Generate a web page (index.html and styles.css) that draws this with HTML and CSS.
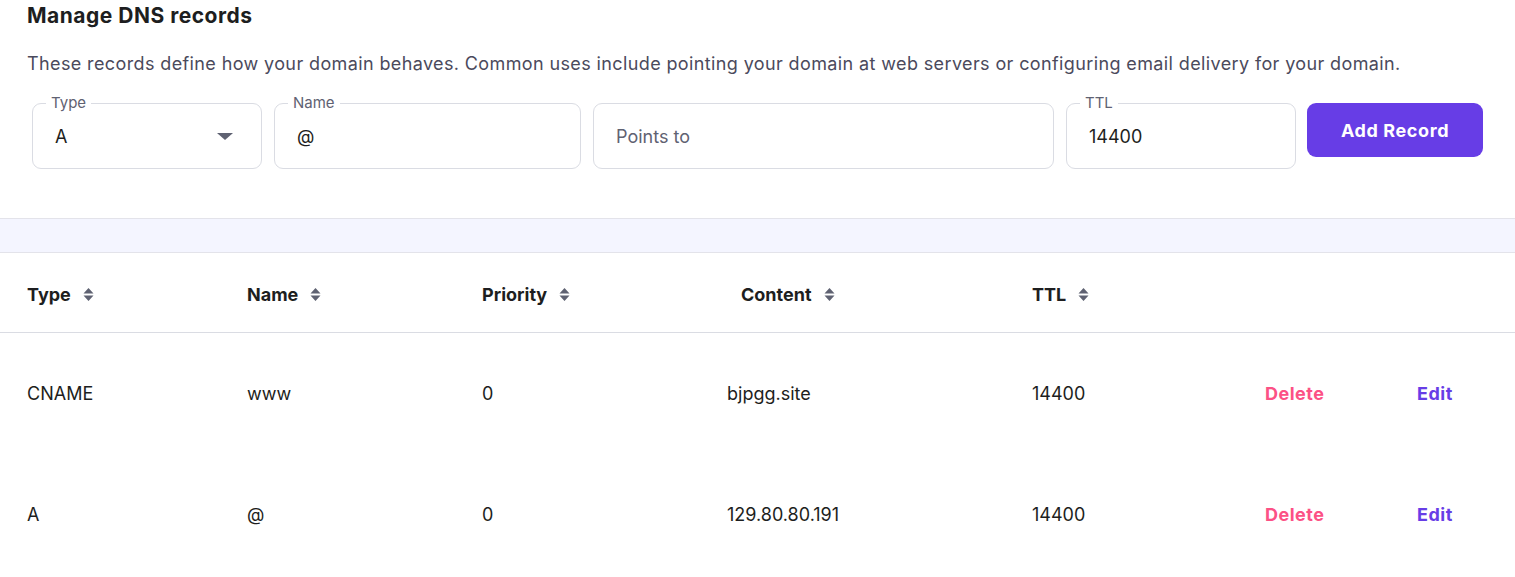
FILE: index.html
```html
<!DOCTYPE html>
<html lang="en">
<head>
<meta charset="utf-8">
<title>Manage DNS records</title>
<link rel="stylesheet" href="styles.css">
</head>
<body>
<section class="manage">
  <h2 class="title">Manage DNS records</h2>
  <p class="desc">These records define how your domain behaves. Common uses include pointing your domain at web servers or configuring email delivery for your domain.</p>
  <form class="form-row">
    <div class="field field-type">
      <span class="label">Type</span>
      <span class="value">A</span>
      <svg class="caret" width="16" height="7" viewBox="0 0 16 7"><path d="M0 0h16L8 7z" fill="#5f6272"/></svg>
    </div>
    <div class="field field-name">
      <span class="label">Name</span>
      <span class="value">@</span>
    </div>
    <div class="field field-points">
      <span class="value placeholder">Points to</span>
    </div>
    <div class="field field-ttl">
      <span class="label">TTL</span>
      <span class="value">14400</span>
    </div>
    <button type="button" class="btn-add">Add Record</button>
  </form>
</section>
<div class="band"></div>
<div class="table">
  <div class="row head">
    <div class="c c-type">Type <svg class="sort" width="11" height="13" viewBox="0 0 11 13"><path d="M5.5 0l5 5.5h-10z M5.5 13l5-5.5h-10z" fill="#5f6272"/></svg></div>
    <div class="c c-name">Name <svg class="sort" width="11" height="13" viewBox="0 0 11 13"><path d="M5.5 0l5 5.5h-10z M5.5 13l5-5.5h-10z" fill="#5f6272"/></svg></div>
    <div class="c c-prio">Priority <svg class="sort" width="11" height="13" viewBox="0 0 11 13"><path d="M5.5 0l5 5.5h-10z M5.5 13l5-5.5h-10z" fill="#5f6272"/></svg></div>
    <div class="c c-content">Content <svg class="sort" width="11" height="13" viewBox="0 0 11 13"><path d="M5.5 0l5 5.5h-10z M5.5 13l5-5.5h-10z" fill="#5f6272"/></svg></div>
    <div class="c c-ttl">TTL <svg class="sort" width="11" height="13" viewBox="0 0 11 13"><path d="M5.5 0l5 5.5h-10z M5.5 13l5-5.5h-10z" fill="#5f6272"/></svg></div>
    <div class="c c-del"></div>
    <div class="c c-edit"></div>
  </div>
  <div class="row body">
    <div class="c c-type">CNAME</div>
    <div class="c c-name">www</div>
    <div class="c c-prio">0</div>
    <div class="c c-content">bjpgg.site</div>
    <div class="c c-ttl">14400</div>
    <div class="c c-del"><a class="act del">Delete</a></div>
    <div class="c c-edit"><a class="act edit">Edit</a></div>
  </div>
  <div class="row body">
    <div class="c c-type">A</div>
    <div class="c c-name">@</div>
    <div class="c c-prio">0</div>
    <div class="c c-content">129.80.80.191</div>
    <div class="c c-ttl">14400</div>
    <div class="c c-del"><a class="act del">Delete</a></div>
    <div class="c c-edit"><a class="act edit">Edit</a></div>
  </div>
</div>
</body>
</html>
```
FILE: styles.css
```css
* { box-sizing: border-box; }
body {
  margin: 0;
  font-family: Inter, "Noto Sans", sans-serif;
  color: #1d1e20;
  background: #fff;
}
.manage {
  padding: 4px 0 0 27px;
  height: 218px;
}
.title {
  margin: 0;
  font-size: 21px;
  font-weight: 700;
  line-height: 24px;
  letter-spacing: 0.5px;
}
.desc {
  margin: 24px 0 0;
  font-size: 18px;
  line-height: 24px;
  letter-spacing: 0.38px;
  color: #4b4a5c;
}
.form-row {
  display: flex;
  gap: 12px;
  margin: 27px 0 0 5px;
  align-items: flex-start;
}
.field {
  position: relative;
  height: 66px;
  border: 1px solid #dadce3;
  border-radius: 9px;
  display: flex;
  align-items: center;
  padding: 0 22px;
  font-size: 18px;
}
.field-type { width: 230px; justify-content: space-between; padding-right: 28px; }
.field-name { width: 307px; }
.field-points { width: 461px; }
.field-ttl { width: 230px; }
.label {
  position: absolute;
  top: -11px;
  left: 13px;
  padding: 0 5px;
  background: #fff;
  font-size: 15px;
  line-height: 20px;
  color: #5f6272;
}
.placeholder { color: #5f6272; }
.caret { display: block; }
.btn-add {
  width: 176px;
  height: 54px;
  margin-left: -1px;
  border: none;
  border-radius: 9px;
  background: #673de6;
  color: #fff;
  font-family: inherit;
  font-size: 18px;
  font-weight: 700;
  letter-spacing: 0.6px;
}
.band {
  height: 35px;
  background: #f4f5ff;
  border-top: 1px solid #e3e3ea;
  border-bottom: 1px solid #e3e3ea;
}
.row {
  display: flex;
  align-items: center;
  height: 121px;
  padding-left: 27px;
  font-size: 18px;
}
.row.head {
  height: 80px;
  padding-top: 4px;
  border-bottom: 1px solid #dadce3;
  font-weight: 700;
}
.c { display: flex; align-items: center; gap: 12px; }
.c-type { width: 220px; }
.c-name { width: 235px; }
.c-prio { width: 259px; }
.c-content { width: 291px; }
.row.body .c-prio { width: 245px; }
.row.body .c-content { width: 305px; }
.c-ttl { width: 233px; }
.c-del { width: 152px; }
.c-edit { width: 80px; }
.sort { display: block; }
.act { font-weight: 700; letter-spacing: 0.5px; }
.del { color: #fc5185; }
.edit { color: #673de6; }
```
